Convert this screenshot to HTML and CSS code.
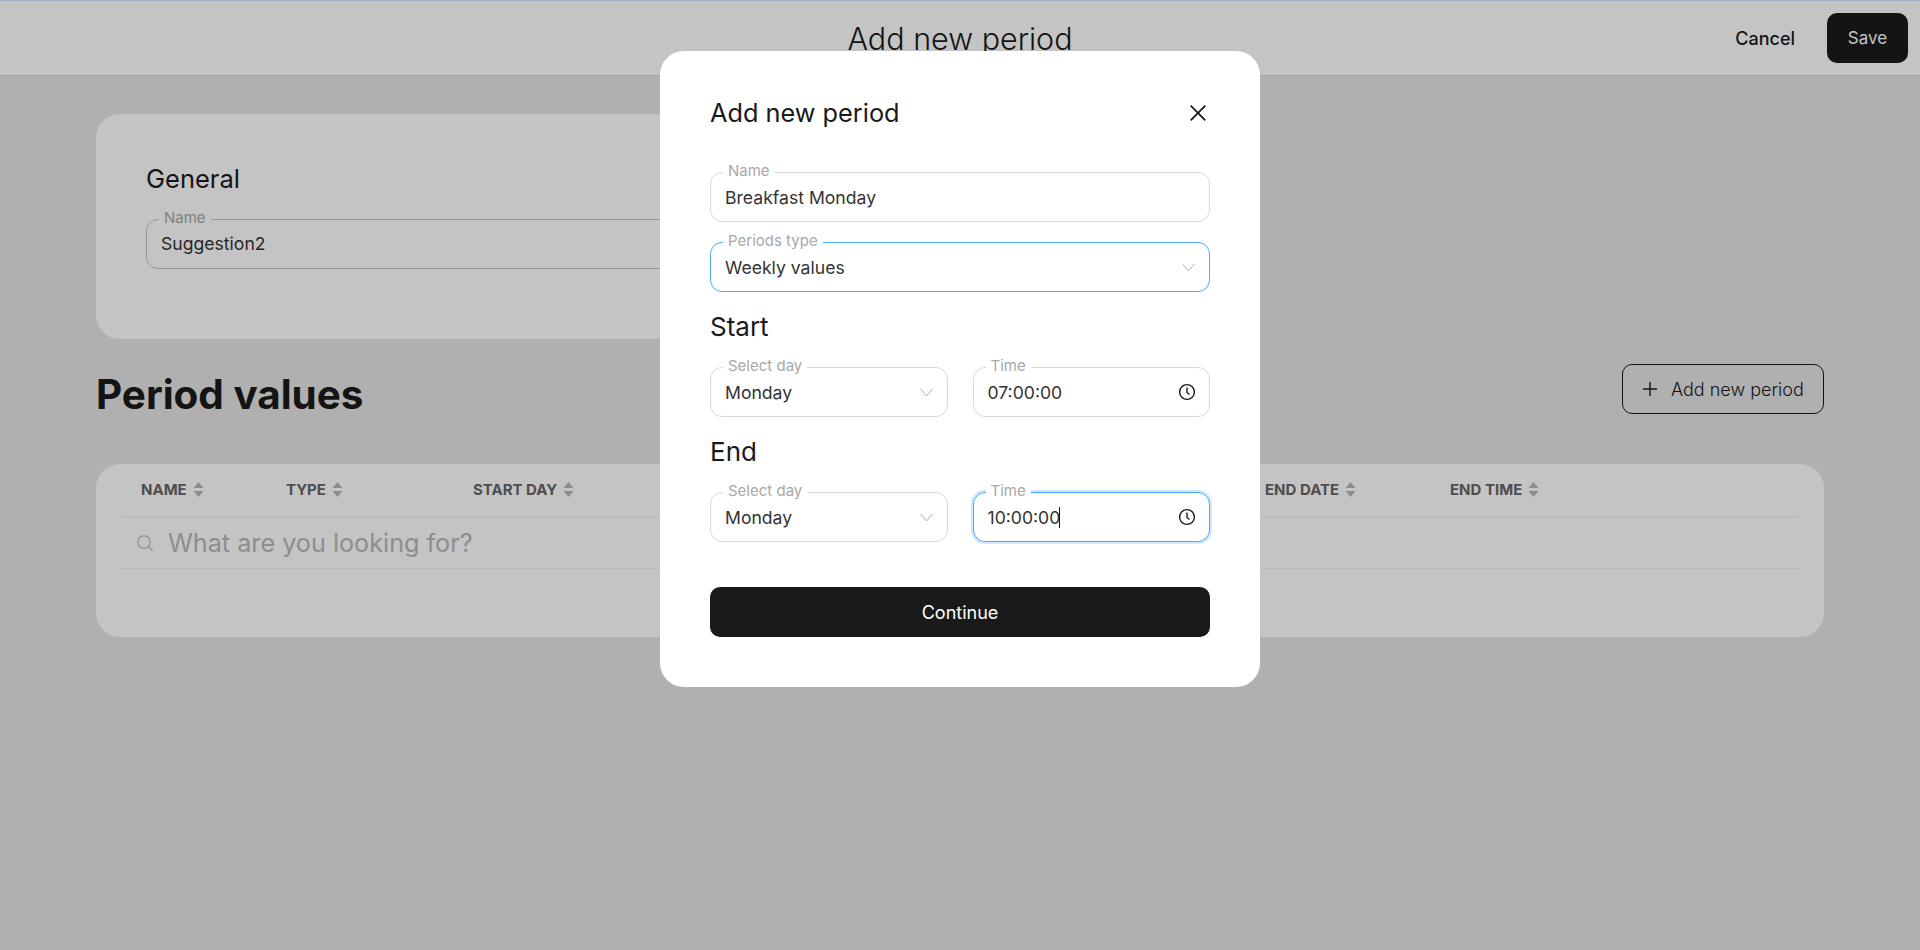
FILE: index.html
```html
<!DOCTYPE html>
<html lang="en">
<head>
    <meta charset="UTF-8">
    <meta name="viewport" content="width=device-width, initial-scale=1.0">
    <title>Add new period</title>
    <link rel="stylesheet" href="styles.css">
</head>
<body>
    <header class="top-bar">
        <div></div>
        <h1 class="top-title">Add new period</h1>
        <div class="top-actions">
            <button class="btn-link">Cancel</button>
            <button class="btn-save">Save</button>
        </div>
    </header>

    <main class="content">
        <section class="card general">
            <h2 class="card-title">General</h2>
            <div class="field field-page">
                <span class="field-label">Name</span>
                <span class="field-value">Suggestion2</span>
            </div>
        </section>

        <div class="section-head">
            <h2 class="section-title">Period values</h2>
            <button class="btn-outline">
                <svg class="icon-plus" viewBox="0 0 16 16"><path d="M8 1v14M1 8h14"/></svg>
                Add new period
            </button>
        </div>

        <section class="card table-card">
            <div class="table-head">
                <div class="th th-name">NAME <svg class="sort" viewBox="0 0 11 15"><path d="M5.500 0l5 6h-10zM5.500 15l-5-6h10z"/></svg></div>
                <div class="th th-type">TYPE <svg class="sort" viewBox="0 0 11 15"><path d="M5.500 0l5 6h-10zM5.500 15l-5-6h10z"/></svg></div>
                <div class="th th-start">START DAY <svg class="sort" viewBox="0 0 11 15"><path d="M5.500 0l5 6h-10zM5.500 15l-5-6h10z"/></svg></div>
                <div class="th th-end-date">END DATE <svg class="sort" viewBox="0 0 11 15"><path d="M5.500 0l5 6h-10zM5.500 15l-5-6h10z"/></svg></div>
                <div class="th">END TIME <svg class="sort" viewBox="0 0 11 15"><path d="M5.500 0l5 6h-10zM5.500 15l-5-6h10z"/></svg></div>
            </div>
            <div class="table-search">
                <svg class="icon-search" viewBox="0 0 18 18"><circle cx="8" cy="8" r="6.3"/><path d="M12.6 12.6l4 4"/></svg>
                <span>What are you looking for?</span>
            </div>
        </section>
    </main>

    <div class="overlay">
        <div class="modal">
            <div class="modal-head">
                <h2 class="modal-title">Add new period</h2>
                <svg class="icon-close" viewBox="0 0 16 16"><path d="M.7 .7l14.600 14.600M15.300 .7L.7 15.300"/></svg>
            </div>

            <div class="field">
                <span class="field-label">Name</span>
                <span class="field-value">Breakfast Monday</span>
            </div>
            <div class="field field-gap field-focus">
                <span class="field-label">Periods type</span>
                <span class="field-value">Weekly values</span>
                <svg class="icon-chevron" viewBox="0 0 13 9"><path d="M.5 .8L6.500 8 12.500 .8"/></svg>
            </div>

            <h3 class="group-title">Start</h3>
            <div class="field-row">
                <div class="field">
                    <span class="field-label">Select day</span>
                    <span class="field-value">Monday</span>
                    <svg class="icon-chevron" viewBox="0 0 13 9"><path d="M.5 .8L6.500 8 12.500 .8"/></svg>
                </div>
                <div class="field">
                    <span class="field-label">Time</span>
                    <span class="field-value">07:00:00</span>
                    <svg class="icon-clock" viewBox="0 0 18 18"><circle cx="9" cy="9" r="7.4"/><path d="M9 4.500V9.500l2.500 2"/></svg>
                </div>
            </div>

            <h3 class="group-title">End</h3>
            <div class="field-row">
                <div class="field">
                    <span class="field-label">Select day</span>
                    <span class="field-value">Monday</span>
                    <svg class="icon-chevron" viewBox="0 0 13 9"><path d="M.5 .8L6.500 8 12.500 .8"/></svg>
                </div>
                <div class="field field-focus field-glow">
                    <span class="field-label">Time</span>
                    <span class="field-value">10:00:00<span class="caret"></span></span>
                    <svg class="icon-clock" viewBox="0 0 18 18"><circle cx="9" cy="9" r="7.4"/><path d="M9 4.500V9.500l2.500 2"/></svg>
                </div>
            </div>

            <button class="btn-continue">Continue</button>
        </div>
    </div>
</body>
</html>
```

FILE: styles.css
```css
* {
    box-sizing: border-box;
}
body {
    margin: 0;
    height: 950px;
    overflow: hidden;
    background-color: #e5e5e5;
    font-family: Inter, 'Noto Sans', sans-serif;
    color: #1a1a1a;
}
h1, h2, h3 {
    margin: 0;
    font-weight: 400;
}
button {
    font-family: inherit;
    cursor: pointer;
}

/* top bar */
.top-bar {
    display: grid;
    grid-template-columns: 1fr auto 1fr;
    align-items: center;
    height: 76px;
    padding: 0 12px;
    background-color: #fff;
    border-top: 1px solid #d5e4ff;
    border-bottom: 1px solid #d9d9d9;
}
.top-title {
    font-size: 30.5px;
    font-weight: 300;
}
.top-actions {
    display: flex;
    justify-content: flex-end;
    align-items: center;
    gap: 32px;
}
.btn-link {
    padding: 0;
    border: none;
    background: none;
    color: #1a1a1a;
    font-size: 18px;
    font-weight: 500;
}
.btn-save {
    width: 81px;
    height: 50px;
    border: none;
    border-radius: 10px;
    background-color: #1a1a1a;
    color: #fff;
    font-size: 17px;
}

/* page */
.content {
    padding: 38px 96px 0;
}
.card {
    background-color: #fff;
    border-radius: 24px;
}
.general {
    width: 1000px;
    height: 225px;
    padding: 50px 50px 0;
}
.card-title {
    font-size: 25.5px;
    line-height: 30px;
    margin-bottom: 25px;
}
.section-head {
    display: flex;
    justify-content: space-between;
    align-items: center;
    height: 50px;
    margin: 25px 0 50px;
}
.section-title {
    padding-top: 10px;
    font-size: 40.4px;
    font-weight: 700;
}
.btn-outline {
    display: flex;
    align-items: center;
    gap: 13px;
    width: 202px;
    height: 50px;
    padding: 0 19px;
    border: 1px solid #1a1a1a;
    border-radius: 10px;
    background: none;
    color: #1a1a1a;
    font-size: 18px;
    font-weight: 300;
}
.icon-plus {
    width: 16px;
    height: 16px;
    fill: none;
    stroke: #1a1a1a;
    stroke-width: 1.4;
}
.table-card {
    height: 173px;
    padding: 0 25px;
}
.table-head {
    display: flex;
    align-items: center;
    height: 54px;
    padding-left: 20px;
    padding-bottom: 2px;
    border-bottom: 1px solid #f0f0f0;
}
.th {
    display: flex;
    align-items: center;
    gap: 6px;
    font-size: 15px;
    font-weight: 700;
    color: #666;
}
.th-name { width: 145px; }
.th-type { width: 187px; }
.th-start { width: 792px; }
.th-end-date { width: 185px; }
.sort {
    width: 11px;
    height: 15px;
    fill: #b8b8b8;
}
.table-search {
    display: flex;
    align-items: center;
    gap: 14px;
    height: 51px;
    padding-left: 15px;
    border-bottom: 1px solid #f0f0f0;
    font-size: 25.2px;
    color: #b8b8b8;
}
.icon-search {
    width: 18px;
    height: 18px;
    fill: none;
    stroke: #c4c4c4;
    stroke-width: 1.5;
}

/* modal */
.overlay {
    position: fixed;
    inset: 0;
    display: flex;
    justify-content: center;
    align-items: flex-start;
    padding-top: 51px;
    background-color: rgba(0, 0, 0, 0.23);
}
.modal {
    width: 600px;
    padding: 46px 50px 50px;
    background-color: #fff;
    border-radius: 24px;
}
.modal-head {
    display: flex;
    justify-content: space-between;
    align-items: center;
    height: 32px;
    margin-bottom: 43px;
}
.modal-title {
    padding-bottom: 2px;
    font-size: 25.3px;
}
.icon-close {
    width: 16px;
    height: 16px;
    margin-right: 4px;
    fill: none;
    stroke: #1a1a1a;
    stroke-width: 1.8;
}
.group-title {
    margin: 20px 0 25px;
    font-size: 26px;
    line-height: 30px;
}
.field-row {
    display: grid;
    grid-template-columns: 1fr 1fr;
    gap: 25px;
}

/* outlined field with the label sitting on the border */
.field {
    position: relative;
    display: flex;
    align-items: center;
    height: 50px;
    padding: 0 14px;
    border: 1px solid #d9d9d9;
    border-radius: 12px;
    background-color: #fff;
}
.field-gap {
    margin-top: 20px;
}
.field-page {
    padding-bottom: 2px;
    border-color: #c4c4c4;
}
.field-label {
    position: absolute;
    top: -11px;
    left: 12px;
    padding: 0 5px;
    background-color: #fff;
    font-size: 15px;
    line-height: 18px;
    color: #a8a8a8;
}
.field-value {
    font-size: 17.6px;
    color: #333;
}
.field-focus {
    border-color: #4aa8ff;
}
.field-glow {
    box-shadow: 0 0 0 2px #cfe8ff;
}
.caret {
    display: inline-block;
    width: 1px;
    height: 21px;
    margin-left: -1px;
    vertical-align: -4px;
    background-color: #1a1a1a;
}
.icon-chevron {
    position: absolute;
    right: 14px;
    top: 20px;
    width: 13px;
    height: 9px;
    fill: none;
    stroke: #b0b0b0;
    stroke-width: 1;
}
.icon-clock {
    position: absolute;
    right: 13px;
    top: 15px;
    width: 18px;
    height: 18px;
    fill: none;
    stroke: #1a1a1a;
    stroke-width: 1.4;
}
.btn-continue {
    display: block;
    width: 100%;
    height: 50px;
    margin-top: 45px;
    border: none;
    border-radius: 10px;
    background-color: #1a1a1a;
    color: #fff;
    font-size: 18px;
}
```
